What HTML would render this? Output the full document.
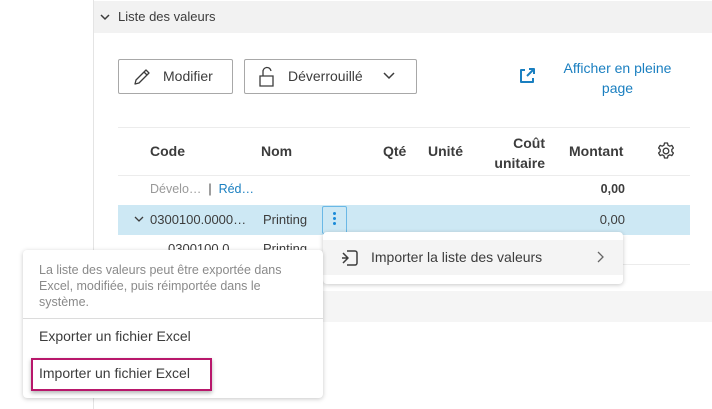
<!DOCTYPE html>
<html><head><meta charset="utf-8"><style>
*{box-sizing:border-box;margin:0;padding:0}
body{width:712px;height:409px;overflow:hidden;background:#fff;font-family:"Liberation Sans",sans-serif;color:#3c3c3c;position:relative}
.a{position:absolute;white-space:nowrap}
.b{font-weight:bold}
</style></head><body>
<div class="a" style="left:93px;top:0;width:1px;height:409px;background:#e4e4e4"></div>
<div class="a" style="left:94px;top:1px;width:618px;height:32px;background:#f2f2f2"></div>
<svg class="a" style="left:99px;top:12px" width="12" height="10"><path d="M2 3l4 4 4-4" stroke="#3c3c3c" stroke-width="1.5" fill="none"/></svg>
<div class="a" style="left:118px;top:9px;font-size:13px">Liste des valeurs</div>

<div class="a" style="left:118px;top:59px;width:115px;height:35px;border:1px solid #a8a8a8;border-radius:2px"></div>
<svg class="a" style="left:132px;top:67px" width="20" height="20"><path d="M3 17l1-4L14 3l3 3L7 16z M12 5l3 3" stroke="#3c3c3c" stroke-width="1.3" fill="none" stroke-linejoin="round"/></svg>
<div class="a" style="left:163px;top:68px;font-size:14px">Modifier</div>
<div class="a" style="left:244px;top:59px;width:173px;height:35px;border:1px solid #a8a8a8;border-radius:2px"></div>
<svg class="a" style="left:258px;top:66px" width="18" height="22"><path d="M2 10h13v10H2z M5 10V6a4 4 0 0 1 8-1" stroke="#3c3c3c" stroke-width="1.3" fill="none"/></svg>
<div class="a" style="left:288px;top:68px;font-size:14px">Déverrouillé</div>
<svg class="a" style="left:382px;top:70px" width="14" height="12"><path d="M2 3l5 5 5-5" stroke="#3c3c3c" stroke-width="1.5" fill="none"/></svg>

<svg class="a" style="left:518px;top:67px" width="18" height="18"><path d="M7 3H3v12h12v-4 M9 9l7-7 M11 2h5v5" stroke="#1a7fc0" stroke-width="2" fill="none" stroke-linejoin="round"/></svg>
<div class="a" style="left:545px;top:58px;width:145px;text-align:center;font-size:14px;line-height:20px;color:#1a7fc0">Afficher en pleine<br>page</div>

<div class="a" style="left:118px;top:127px;width:572px;height:1px;background:#ececec"></div>
<div class="a b" style="left:150px;top:143px;font-size:14px">Code</div>
<div class="a b" style="left:261px;top:143px;font-size:14px">Nom</div>
<div class="a b" style="left:383px;top:143px;font-size:14px">Qté</div>
<div class="a b" style="left:428px;top:143px;font-size:14px">Unité</div>
<div class="a b" style="left:470px;top:133px;width:75px;text-align:right;font-size:14px;line-height:20px">Coût<br>unitaire</div>
<div class="a b" style="left:569px;top:143px;font-size:14px">Montant</div>
<svg class="a" style="left:656px;top:141px" width="20" height="20"><circle cx="10" cy="10" r="2.8" stroke="#3c3c3c" stroke-width="1.3" fill="none"/><path d="M8.5 2h3l.5 2.2 1.8 1 2.1-.8 1.5 2.6-1.6 1.5v2l1.6 1.5-1.5 2.6-2.1-.8-1.8 1-.5 2.2h-3l-.5-2.2-1.8-1-2.1.8-1.5-2.6 1.6-1.5v-2L2.6 7l1.5-2.6 2.1.8 1.8-1z" stroke="#3c3c3c" stroke-width="1.3" fill="none" stroke-linejoin="round"/></svg>
<div class="a" style="left:118px;top:175px;width:572px;height:1px;background:#ececec"></div>
<div class="a" style="left:150px;top:182px;font-size:12.5px;color:#999">Dévelo… <span style="color:#3c3c3c">&nbsp;|&nbsp;</span> <span style="color:#1a7fc0">Réd…</span></div>
<div class="a b" style="left:560px;top:182px;width:65px;text-align:right;font-size:12.5px">0,00</div>

<div class="a" style="left:118px;top:205px;width:572px;height:30px;background:#cde8f4"></div>
<svg class="a" style="left:133px;top:214px" width="12" height="10"><path d="M2 3l4 4 4-4" stroke="#3c3c3c" stroke-width="1.3" fill="none"/></svg>
<div class="a" style="left:150px;top:212px;font-size:13px">0300100.0000…</div>
<div class="a" style="left:263px;top:212px;font-size:13px">Printing</div>
<div class="a" style="left:322px;top:206px;width:25px;height:28px;border:1.5px solid #6ab8e6;border-radius:2px"></div>
<div class="a" style="left:333px;top:212px;width:3px;height:3px;border-radius:2px;background:#1a8ad8;box-shadow:0 5px 0 #1a8ad8,0 10px 0 #1a8ad8"></div>
<div class="a" style="left:560px;top:212px;width:65px;text-align:right;font-size:13px">0,00</div>
<div class="a" style="left:168px;top:241px;font-size:13px">0300100.0…</div>
<div class="a" style="left:263px;top:241px;font-size:13px">Printing</div>
<div class="a" style="left:118px;top:264px;width:572px;height:1px;background:#ececec"></div>
<div class="a" style="left:94px;top:291px;width:618px;height:31px;background:#f5f5f5"></div>

<div class="a" style="left:323px;top:232px;width:300px;height:52px;background:#fff;border-radius:4px;box-shadow:0 1px 5px rgba(0,0,0,.22)"></div>
<div class="a" style="left:323px;top:240px;width:300px;height:35px;background:#f4f4f4"></div>
<svg class="a" style="left:340px;top:248px" width="20" height="20"><path d="M7 3h8a2 2 0 0 1 2 2v10a2 2 0 0 1-2 2H7 M3 5l5 5-5 5 M8 10H2" stroke="#3c3c3c" stroke-width="1.5" fill="none" stroke-linejoin="round"/></svg>
<div class="a" style="left:371px;top:249px;font-size:14px">Importer la liste des valeurs</div>
<svg class="a" style="left:595px;top:250px" width="12" height="14"><path d="M3 2l5 5-5 5" stroke="#666" stroke-width="1.3" fill="none"/></svg>

<div class="a" style="left:23px;top:250px;width:300px;height:148px;background:#fff;border-radius:4px;box-shadow:0 1px 5px rgba(0,0,0,.22)"></div>
<div class="a" style="left:39px;top:262px;font-size:12.5px;line-height:16px;color:#8a8a8a">La liste des valeurs peut être exportée dans<br>Excel, modifiée, puis réimportée dans le<br>système.</div>
<div class="a" style="left:23px;top:318px;width:300px;height:1px;background:#dcdcdc"></div>
<div class="a" style="left:39px;top:328px;font-size:14px">Exporter un fichier Excel</div>
<div class="a" style="left:31px;top:358px;width:181px;height:33px;border:2px solid #b8176b;box-shadow:0 2px 4px rgba(0,0,0,.3)"></div>
<div class="a" style="left:39px;top:365px;font-size:14px">Importer un fichier Excel</div>
</body></html>
